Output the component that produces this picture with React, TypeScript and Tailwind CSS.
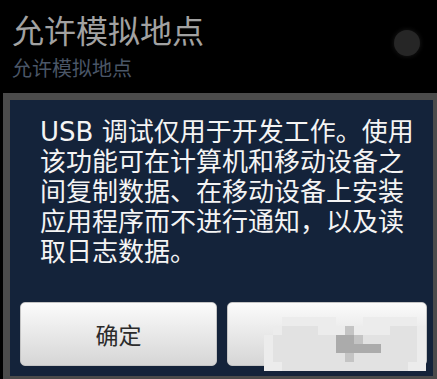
const cells = [
  '..aaaaaa...aaaaaa.',
  '.abbbbaaacaaaabbba',
  'abbbbbbbddcbbbbbba',
  'abbbbbbbdddddbbbba',
  'abbbbbbbbcbbbbbbba',
  'aabbbbbbbbbbbbbbaa',
]

const shade: Record<string, string> = {
  '.': 'transparent',
  a: '#ececec',
  b: '#e2e2e2',
  c: '#c4c4c4',
  d: '#ababab',
}

function Mosaic() {
  return (
    <div className="absolute left-[36px] top-[14px] grid grid-cols-[repeat(18,9px)] grid-rows-[repeat(6,9px)]">
      {cells.join('').split('').map((c, i) => (
        <div key={i} style={{ background: shade[c] }} />
      ))}
    </div>
  )
}

export default function App() {
  return (
    <div className="relative w-[437px] h-[379px] overflow-hidden bg-black font-['Noto_Sans_CJK_SC',sans-serif]">
      <div className="flex h-[93px] items-start justify-between pl-[12px] pr-[17px] pt-[11px]">
        <div>
          <div className="text-[32px] leading-[37px] text-[#a2a2a2]">允许模拟地点</div>
          <div className="mt-[8px] text-[20px] leading-[24px] text-[#4a5667]">允许模拟地点</div>
        </div>
        <div className="mt-[19px] h-[26px] w-[26px] rounded-full bg-[#262626] shadow-[0_0_5px_#1c1c1c]" />
      </div>

      <div className="ml-[3px] h-[290px] w-[437px] border-[7px] border-[#4b4b4b] bg-[#14233a]">
        <div className="pl-[30px] pt-[17px] text-[26px] leading-[30px] text-[#f4f4f4] whitespace-nowrap font-['DejaVu_Sans','Noto_Sans_CJK_SC',sans-serif]">
          USB 调试仅用于开发工作。使用<br />
          该功能可在计算机和移动设备之<br />
          间复制数据、在移动设备上安装<br />
          应用程序而不进行通知，以及读<br />
          取日志数据。
        </div>

        <div className="mt-[35px] flex gap-[10px] pl-[10px] pr-[6px]">
          <button className="flex h-[64px] w-[197px] items-center justify-center rounded-[5px] border border-[#c4c4c4] bg-gradient-to-b from-[#fbfbfb] to-[#d6d6d6] text-[23px] text-[#2b2b2b]">
            确定
          </button>
          <button className="relative h-[64px] flex-1 rounded-[5px] border border-[#c4c4c4] bg-gradient-to-b from-[#fbfbfb] to-[#d6d6d6]">
            <Mosaic />
          </button>
        </div>
      </div>
    </div>
  )
}
